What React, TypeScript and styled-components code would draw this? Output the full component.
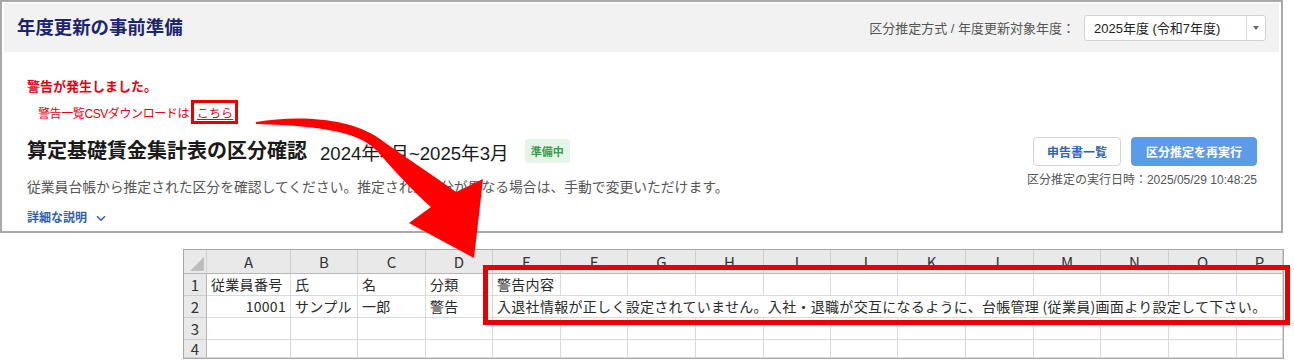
import React from "react";
import styled, { createGlobalStyle } from "styled-components";

const GlobalStyle = createGlobalStyle`
  html, body { margin: 0; padding: 0; background: #ffffff; }
  body { font-family: "Liberation Sans", "Noto Sans CJK JP", sans-serif; }
  * { box-sizing: border-box; }
`;

const Page = styled.div`
  position: relative;
  width: 1294px;
  height: 361px;
  overflow: hidden;
  background: #fff;
`;

const Panel = styled.section`
  width: 1283px;
  height: 233px;
  border: 2px solid #a9a9a9;
  padding: 1px 2px 0 2px;
  display: flex;
  flex-direction: column;
`;

const Header = styled.header`
  height: 49px;
  background: #f2f2f2;
  display: flex;
  align-items: center;
  justify-content: space-between;
  padding: 0 13px;
`;

const HeaderTitle = styled.h1`
  margin: 0;
  font-size: 18.4px;
  font-weight: bold;
  color: #1b246e;
  line-height: 24px;
`;

const HeaderRight = styled.div`
  display: flex;
  align-items: center;
  gap: 9px;
`;

const HeaderLabel = styled.span`
  font-size: 13px;
  color: #555;
`;

const Select = styled.div`
  width: 182px;
  height: 26px;
  background: #fff;
  border: 1px solid #d2d2d2;
  border-radius: 3px;
  display: flex;
  align-items: stretch;
`;

const SelectValue = styled.span`
  flex: 1;
  display: flex;
  align-items: center;
  padding-left: 9px;
  font-size: 13px;
  color: #222;
`;

const SelectCaret = styled.span`
  width: 19px;
  border-left: 1px solid #e0e0e0;
  display: flex;
  align-items: center;
  justify-content: center;
  &::after {
    content: "";
    border-left: 3.5px solid transparent;
    border-right: 3.5px solid transparent;
    border-top: 4px solid #666;
  }
`;

const Body = styled.div`
  flex: 1;
  padding: 26px 22px 0 23px;
  display: flex;
  flex-direction: column;
`;

const WarningTitle = styled.p`
  margin: 0;
  font-size: 13px;
  line-height: 18px;
  font-weight: bold;
  color: #e60012;
`;

const WarningLine = styled.div`
  margin-top: 4px;
  height: 24px;
  padding-left: 11px;
  display: flex;
  align-items: center;
  font-size: 12px;
  letter-spacing: -0.4px;
  color: #e60012;
`;

const CsvBox = styled.span`
  height: 24px;
  margin-left: 2px;
  padding: 0 2px 0 3px;
  border: 3px solid #e60000;
  display: inline-flex;
  align-items: center;
`;

const CsvLink = styled.a`
  color: #e60012;
  text-decoration: underline;
  font-size: 12px;
  letter-spacing: 0;
`;

const MainRow = styled.div`
  margin-top: 12px;
  display: flex;
  justify-content: space-between;
  align-items: flex-start;
`;

const LeftCol = styled.div`
  display: flex;
  flex-direction: column;
`;

const TitleLine = styled.div`
  height: 30px;
  display: flex;
  align-items: center;
`;

const MainTitle = styled.h2`
  margin: 0;
  font-size: 20px;
  font-weight: bold;
  color: #1a1a1a;
  line-height: 30px;
`;

const Period = styled.span`
  margin-left: 13px;
  font-size: 18.6px;
  color: #1a1a1a;
`;

const Badge = styled.span`
  margin-left: 16px;
  height: 24px;
  padding: 0 6px;
  border-radius: 3px;
  background: #e5f4e8;
  color: #3b9b4c;
  font-size: 11px;
  font-weight: bold;
  display: inline-flex;
  align-items: center;
`;

const Description = styled.p`
  margin: 12px 0 0;
  font-size: 13.8px;
  line-height: 20px;
  color: #555;
`;

const Details = styled.a`
  margin-top: 11px;
  display: inline-flex;
  align-items: center;
  gap: 9px;
  font-size: 12px;
  line-height: 18px;
  font-weight: bold;
  color: #2f5fad;
`;

const RightCol = styled.div`
  margin-top: 1px;
  display: flex;
  flex-direction: column;
  align-items: flex-end;
`;

const Buttons = styled.div`
  display: flex;
  gap: 10px;
`;

const Button = styled.button<{ $primary?: boolean }>`
  height: 29px;
  padding: 0 ${(p) => (p.$primary ? "14px" : "13px")};
  border-radius: 4px;
  font-family: "Liberation Sans", "Noto Sans CJK JP", sans-serif;
  font-size: 12px;
  font-weight: bold;
  cursor: pointer;
  border: 1px solid ${(p) => (p.$primary ? "#5b9be8" : "#d3d3d3")};
  background: ${(p) => (p.$primary ? "#5b9be8" : "#fff")};
  color: ${(p) => (p.$primary ? "#fff" : "#2f63b5")};
`;

const Timestamp = styled.span`
  margin-top: 6px;
  font-size: 12px;
  line-height: 16px;
  color: #555;
`;

/* Spreadsheet */

const SheetWrap = styled.div`
  position: relative;
  margin: 16px 0 0 183px;
  width: 1101px;
`;

const Sheet = styled.div`
  display: grid;
  grid-template-columns: 23px 84px 67px 68px 67px 68px 67px 68px 68px 67px 67px 68px 68px 67px 68px 68px 46px;
  grid-template-rows: 24px 22px 22px 22px 18px;
  border: 1px solid #a8a8a8;
  font-family: "Noto Sans CJK JP", sans-serif;
  font-size: 14px;
  color: #2a2a2a;
  overflow: hidden;
`;

const Cell = styled.div<{ $align?: "left" | "right" | "center"; $span?: number }>`
  border-right: 1px solid #dadada;
  border-bottom: 1px solid #dadada;
  padding: 0 4px;
  line-height: 21px;
  letter-spacing: 0.3px;
  white-space: nowrap;
  overflow: hidden;
  text-align: ${(p) => p.$align ?? "left"};
  ${(p) => (p.$span ? `grid-column: span ${p.$span};` : "")}
`;

const ColHead = styled.div`
  background: #e9e9e9;
  border-right: 1px solid #cfcfcf;
  border-bottom: 1px solid #b5b5b5;
  text-align: center;
  line-height: 23px;
  font-size: 15px;
  color: #333;
`;

const Corner = styled.div`
  position: relative;
  background: #e9e9e9;
  border-right: 1px solid #cfcfcf;
  border-bottom: 1px solid #b5b5b5;
  &::after {
    content: "";
    position: absolute;
    right: 2px;
    bottom: 2px;
    border-left: 14px solid transparent;
    border-bottom: 14px solid #bdbdbd;
  }
`;

const RowHead = styled.div`
  background: #e9e9e9;
  border-right: 1px solid #b5b5b5;
  border-bottom: 1px solid #cfcfcf;
  display: flex;
  align-items: center;
  justify-content: center;
  font-size: 15px;
  line-height: 17px;
  color: #333;
`;

const HighlightBox = styled.div`
  position: absolute;
  left: 300px;
  top: 16px;
  width: 807px;
  height: 60px;
  border: 5px solid #e60000;
  pointer-events: none;
`;

const ArrowLayer = styled.svg`
  position: absolute;
  left: 0;
  top: 0;
  pointer-events: none;
`;

const columns = ["A", "B", "C", "D", "E", "F", "G", "H", "I", "J", "K", "L", "M", "N", "O", "P"];

const row1 = ["従業員番号", "氏", "名", "分類", "警告内容"];

export default function App() {
  return (
    <>
      <GlobalStyle />
      <Page>
        <Panel>
          <Header>
            <HeaderTitle>年度更新の事前準備</HeaderTitle>
            <HeaderRight>
              <HeaderLabel>区分推定方式 / 年度更新対象年度：</HeaderLabel>
              <Select>
                <SelectValue>2025年度 (令和7年度)</SelectValue>
                <SelectCaret />
              </Select>
            </HeaderRight>
          </Header>
          <Body>
            <WarningTitle>警告が発生しました。</WarningTitle>
            <WarningLine>
              警告一覧CSVダウンロードは
              <CsvBox>
                <CsvLink>こちら</CsvLink>
              </CsvBox>
            </WarningLine>
            <MainRow>
              <LeftCol>
                <TitleLine>
                  <MainTitle>算定基礎賃金集計表の区分確認</MainTitle>
                  <Period>2024年4月~2025年3月</Period>
                  <Badge>準備中</Badge>
                </TitleLine>
                <Description>
                  従業員台帳から推定された区分を確認してください。推定された区分が異なる場合は、手動で変更いただけます。
                </Description>
                <div>
                  <Details>
                    詳細な説明
                    <svg width="10" height="7" viewBox="0 0 10 7">
                      <path d="M1 1.2 L5 5.2 L9 1.2" fill="none" stroke="#2f5fad" strokeWidth="1.5" />
                    </svg>
                  </Details>
                </div>
              </LeftCol>
              <RightCol>
                <Buttons>
                  <Button>申告書一覧</Button>
                  <Button $primary>区分推定を再実行</Button>
                </Buttons>
                <Timestamp>区分推定の実行日時：2025/05/29 10:48:25</Timestamp>
              </RightCol>
            </MainRow>
          </Body>
        </Panel>

        <SheetWrap>
          <Sheet>
            <Corner />
            {columns.map((c) => (
              <ColHead key={c}>{c}</ColHead>
            ))}
            <RowHead>1</RowHead>
            {columns.map((c, i) => (
              <Cell key={c}>{row1[i] ?? ""}</Cell>
            ))}
            <RowHead>2</RowHead>
            <Cell $align="right">10001</Cell>
            <Cell>サンプル</Cell>
            <Cell>一郎</Cell>
            <Cell>警告</Cell>
            <Cell $span={12}>
              入退社情報が正しく設定されていません。入社・退職が交互になるように、台帳管理 (従業員)画面より設定して下さい。
            </Cell>
            <RowHead>3</RowHead>
            {columns.map((c) => (
              <Cell key={c} />
            ))}
            <RowHead>4</RowHead>
            {columns.map((c) => (
              <Cell key={c} />
            ))}
          </Sheet>
          <HighlightBox />
        </SheetWrap>

        <ArrowLayer width="1294" height="361" viewBox="0 0 1294 361">
          <path
            d="M256 122 C 300 115 350 118 380 139 C 405 157 430 173 456 192 L 483 179 L 474 258 L 409 223 L 431 207 C 418 196 398 175 378 152 C 362 134 330 126 256 124 Z"
            fill="#ff0000"
          />
        </ArrowLayer>
      </Page>
    </>
  );
}
